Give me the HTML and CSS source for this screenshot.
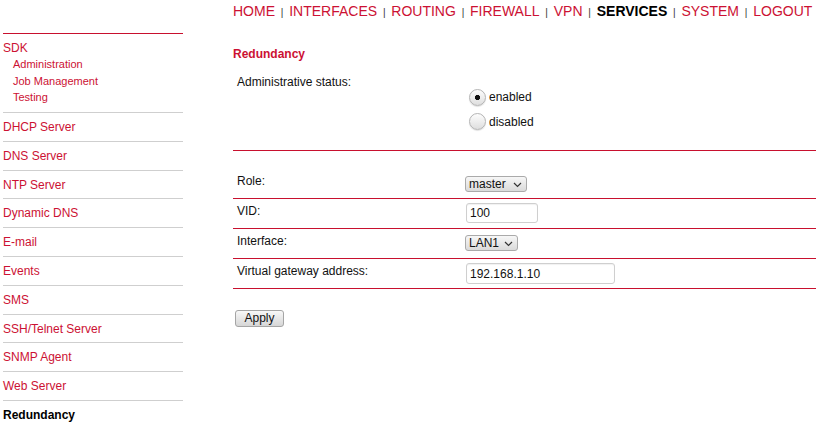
FILE: index.html
```html
<!DOCTYPE html>
<html lang="en">
<head>
<meta charset="utf-8">
<title>Redundancy</title>
<link rel="stylesheet" href="styles.css">
</head>
<body>
<header class="topnav">
  <a class="navlink" href="#">HOME</a><span class="sep">|</span>
  <a class="navlink" href="#">INTERFACES</a><span class="sep">|</span>
  <a class="navlink" href="#">ROUTING</a><span class="sep">|</span>
  <a class="navlink" href="#">FIREWALL</a><span class="sep">|</span>
  <a class="navlink" href="#">VPN</a><span class="sep">|</span>
  <a class="navlink active" href="#">SERVICES</a><span class="sep">|</span>
  <a class="navlink" href="#">SYSTEM</a><span class="sep">|</span>
  <a class="navlink" href="#">LOGOUT</a>
</header>
<div class="layout">
  <nav class="sidebar">
    <div class="group">
      <a class="group-title" href="#">SDK</a>
      <a class="sub" href="#">Administration</a>
      <a class="sub" href="#">Job Management</a>
      <a class="sub" href="#">Testing</a>
    </div>
    <a class="item" href="#">DHCP Server</a>
    <a class="item" href="#">DNS Server</a>
    <a class="item" href="#">NTP Server</a>
    <a class="item" href="#">Dynamic DNS</a>
    <a class="item" href="#">E-mail</a>
    <a class="item" href="#">Events</a>
    <a class="item" href="#">SMS</a>
    <a class="item" href="#">SSH/Telnet Server</a>
    <a class="item" href="#">SNMP Agent</a>
    <a class="item" href="#">Web Server</a>
    <span class="item current">Redundancy</span>
  </nav>
  <main class="content">
    <h1 class="title">Redundancy</h1>
    <div class="status-row">
      <div class="label">Administrative status:</div>
      <div class="radios">
        <label class="radio-line"><input class="radio" type="radio" name="st" checked><span>enabled</span></label>
        <label class="radio-line"><input class="radio" type="radio" name="st"><span>disabled</span></label>
      </div>
    </div>
    <div class="form-row first">
      <div class="label">Role:</div>
      <div class="value"><span class="select-wrap w-master"><select class="select"><option>master</option><option>backup</option></select><svg class="chev" width="9" height="6" viewBox="0 0 9 6"><path d="M1 1 L4.5 4.5 L8 1" fill="none" stroke="#333" stroke-width="1.2"/></svg></span></div>
    </div>
    <div class="form-row">
      <div class="label">VID:</div>
      <div class="value"><input class="text w-vid" type="text" value="100"></div>
    </div>
    <div class="form-row">
      <div class="label">Interface:</div>
      <div class="value"><span class="select-wrap w-lan"><select class="select"><option>LAN1</option></select><svg class="chev" width="9" height="6" viewBox="0 0 9 6"><path d="M1 1 L4.5 4.5 L8 1" fill="none" stroke="#333" stroke-width="1.2"/></svg></span></div>
    </div>
    <div class="form-row">
      <div class="label">Virtual gateway address:</div>
      <div class="value"><input class="text w-ip" type="text" value="192.168.1.10"></div>
    </div>
    <button class="btn" type="button">Apply</button>
  </main>
</div>
</body>
</html>
```
FILE: styles.css
```css
* { box-sizing: border-box; }
html, body { margin: 0; padding: 0; background: #fff; }
body {
  font-family: "Liberation Sans", Arial, sans-serif;
  font-size: 12px;
  color: #111;
  width: 816px;
  height: 425px;
  overflow: hidden;
}
a { text-decoration: none; }

.topnav {
  display: flex;
  align-items: baseline;
  height: 33px;
  padding: 3px 0 0 233px;
  white-space: nowrap;
}
.navlink {
  font-size: 14px;
  line-height: 16px;
  color: #cc1133;
}
.navlink.active { color: #000; font-weight: bold; }
.sep {
  display: inline-block;
  width: 14.2px;
  text-align: center;
  font-size: 10px;
  color: #333;
}

.layout {
  display: grid;
  grid-template-columns: 180px 583px;
  column-gap: 50px;
  padding-left: 3px;
}

.sidebar {
  display: flex;
  flex-direction: column;
  border-top: 1px solid #c8102e;
}
.group {
  display: flex;
  flex-direction: column;
  padding: 6px 0 6.5px;
  border-bottom: 1px solid #cfcfcf;
}
.group-title { color: #cc1133; font-size: 12px; line-height: 16px; }
.sub { color: #cc1133; font-size: 11px; line-height: 16.5px; padding-left: 10px; }
.item {
  color: #cc1133;
  font-size: 12px;
  line-height: 14px;
  padding: 7px 0 6.8px;
  border-bottom: 1px solid #cfcfcf;
}
.item.current { color: #000; font-weight: bold; border-bottom: none; }

.content { display: flex; flex-direction: column; align-items: stretch; }
.title {
  margin: 14px 0 0;
  font-size: 12px;
  line-height: 14px;
  font-weight: bold;
  color: #cc1133;
}
.status-row {
  display: grid;
  grid-template-columns: 232px 1fr;
  margin-top: 14px;
  padding-bottom: 16px;
  border-bottom: 1px solid #c8102e;
}
.label { padding-left: 4px; line-height: 14px; color: #111; }
.radios { display: flex; flex-direction: column; padding-top: 10px; padding-left: 4px; }
.radio-line { display: flex; align-items: center; height: 24.5px; }
.radio {
  -webkit-appearance: none;
  appearance: none;
  width: 17px;
  height: 17px;
  margin: 0 3px 0 0;
  border-radius: 50%;
  border: 1px solid #b4b4b4;
  background: linear-gradient(#fdfdfd, #dedede);
  box-shadow: 0 1px 1px rgba(0,0,0,0.12);
}
.radio:checked {
  background: radial-gradient(circle, #111 0 2.3px, transparent 2.9px), linear-gradient(#fdfdfd, #dedede);
}

.form-row {
  display: grid;
  grid-template-columns: 232px 1fr;
  height: 30px;
  border-bottom: 1px solid #c8102e;
}
.form-row.first { height: 48px; padding-top: 18px; }
.form-row .label { padding-top: 5px; }
.value { display: flex; align-items: flex-start; }

.select-wrap {
  position: relative;
  display: inline-block;
  height: 16px;
  margin-top: 6px;
}
.form-row.first .select-wrap { margin-top: 7px; }
.w-master { width: 62px; }
.w-lan { width: 53px; }
.select {
  -webkit-appearance: none;
  appearance: none;
  width: 100%;
  height: 16px;
  margin: 0;
  padding: 0 16px 0 3px;
  border: 1px solid #aaa;
  border-radius: 3px;
  background: linear-gradient(#f7f7f7, #dadada);
  font-family: "Liberation Sans", Arial, sans-serif;
  font-size: 12px;
  line-height: 14px;
  color: #111;
}
.chev { position: absolute; right: 5px; top: 6px; pointer-events: none; }

.text {
  margin-top: 4px;
  height: 20px;
  padding: 0 3px;
  border: 1px solid #cfcfcf;
  border-radius: 3px;
  box-shadow: inset 0 1px 1px rgba(0,0,0,0.06);
  font-family: "Liberation Sans", Arial, sans-serif;
  font-size: 12px;
  color: #111;
  background: #fff;
}
.w-vid { width: 72px; margin-left: 1px; }
.w-ip { width: 149px; height: 21px; margin-left: 1px; }

.btn {
  align-self: flex-start;
  margin: 21px 0 0 2px;
  width: 49px;
  height: 17px;
  padding: 0;
  border: 1px solid #a5a5a5;
  border-radius: 3px;
  background: linear-gradient(#f8f8f8, #d6d6d6);
  font-family: "Liberation Sans", Arial, sans-serif;
  font-size: 12px;
  line-height: 15px;
  color: #111;
}
```
